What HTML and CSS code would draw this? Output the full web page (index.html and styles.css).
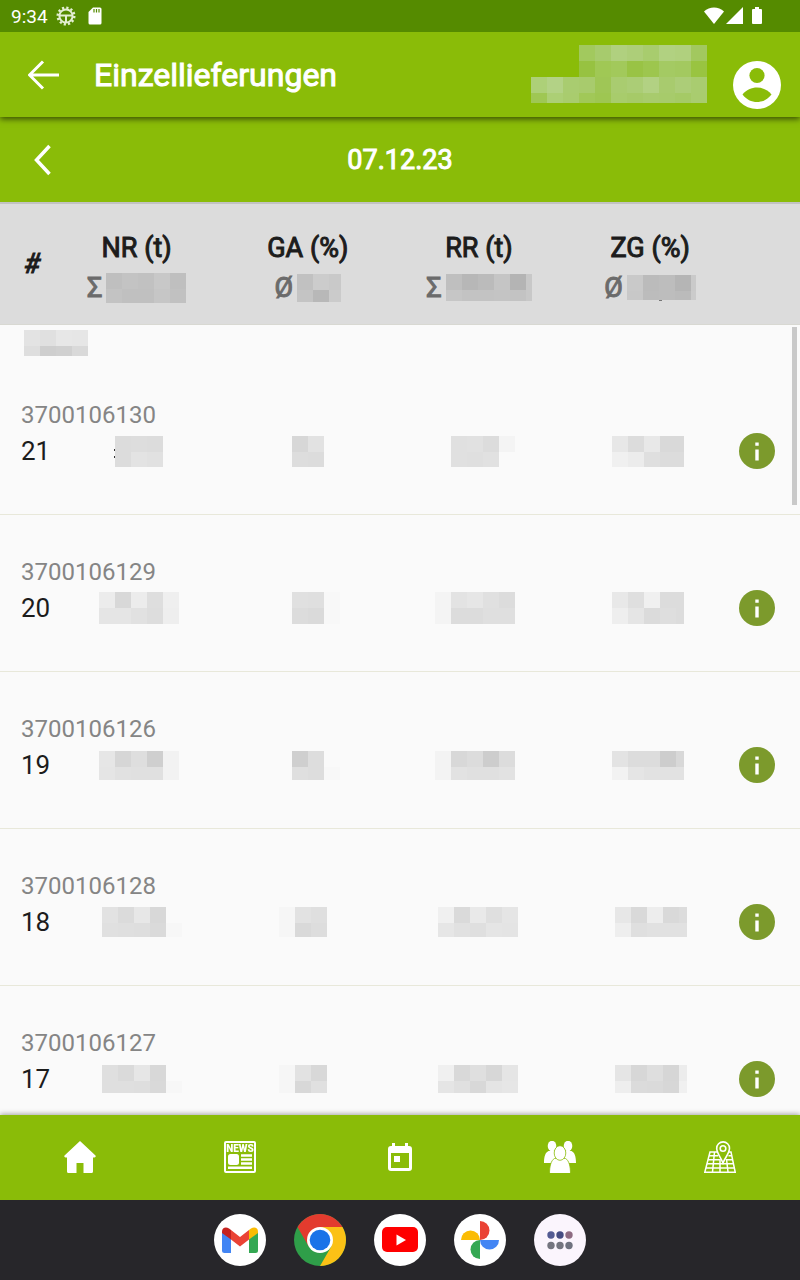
FILE: index.html
```html
<!DOCTYPE html>
<html lang="de">
<head>
    <meta charset="UTF-8">
    <meta name="viewport" content="width=device-width, initial-scale=1.0">
    <title>Einzellieferungen</title>
    <link rel="stylesheet" href="styles.css">
</head>
<body>

    <div class="status-bar">
        <span class="clock">9:34</span>
        <svg class="status-gear" width="20" height="20" viewBox="0 0 20 20">
            <circle cx="10" cy="10" r="8.3" fill="none" stroke="#e4efd2" stroke-width="2.400" stroke-dasharray="2.2 2.15"/>
            <circle cx="10" cy="10" r="6.6" fill="none" stroke="#e4efd2" stroke-width="2"/>
            <path d="M4 9.5h12M10 10v6" stroke="#e4efd2" stroke-width="2"/>
        </svg>
        <svg class="status-card" width="14" height="18" viewBox="0 0 14 18">
            <path fill="#fff" d="M5 0.5h7q1.5 0 1.5 1.5v14q0 1.500-1.500 1.500h-10q-1.500 0-1.500-1.500v-11z"/>
            <path d="M6 2v3.500M8.500 2v3.500M11 2v3.500" stroke="#558b00" stroke-width="1.200"/>
        </svg>
        <div class="status-right">
            <svg width="20" height="17" viewBox="0 0 20 17"><path fill="#fff" d="M10 17L0 4.500C5.500-.7 14.500-.7 20 4.500z"/></svg>
            <svg width="17" height="17" viewBox="0 0 17 17"><path fill="#fff" d="M17 0v17H0z"/></svg>
            <svg class="battery" width="10" height="17" viewBox="0 0 10 17"><path fill="#fff" d="M3 0h4v2h2q1 0 1 1v13q0 1-1 1H1q-1 0-1-1V3q0-1 1-1h2z"/></svg>
        </div>
    </div>

    <header class="app-header">
        <button class="icon-button" aria-label="Zurück">
            <svg width="32" height="30" viewBox="0 0 32 30"><path d="M31 15H2M15 1.500L1.500 15 15 28.500" fill="none" stroke="#fff" stroke-width="3"/></svg>
        </button>
        <h1>Einzellieferungen</h1>
        <svg class="mosaic user-name" id="user-name"></svg>
        <button class="icon-button profile" aria-label="Profil">
            <svg width="48" height="48" viewBox="0 0 48 48">
                <circle cx="24" cy="24" r="24" fill="#fff"/>
                <circle cx="24" cy="14.500" r="7.600" fill="#8abc08"/>
                <path fill="#8abc08" d="M9.500 33.500C17 24.300 31 24.300 38.500 33.500C31 43.500 17 43.500 9.500 33.500z"/>
            </svg>
        </button>
    </header>

    <div class="date-bar">
        <button class="icon-button" aria-label="Vorheriger Tag">
            <svg width="18" height="32" viewBox="0 0 18 32"><path d="M16.500 2L3.500 16l13 14" fill="none" stroke="#fff" stroke-width="3.500"/></svg>
        </button>
        <h2>07.12.23</h2>
    </div>

    <main class="deliveries">
        <div class="scroller">
            <table>
                <colgroup>
                    <col class="col-number">
                    <col class="col-value">
                    <col class="col-value">
                    <col class="col-value">
                    <col class="col-value">
                    <col>
                </colgroup>
                <thead>
                    <tr>
                        <th class="number-head">#</th>
                        <th class="value-head">NR (t)<div class="total">Σ <svg class="mosaic" data-total="0"></svg></div></th>
                        <th class="value-head">GA (%)<div class="total">Ø <svg class="mosaic" data-total="1"></svg></div></th>
                        <th class="value-head">RR (t)<div class="total">Σ <svg class="mosaic" data-total="2"></svg></div></th>
                        <th class="value-head">ZG (%)<div class="total">Ø <svg class="mosaic" data-total="3"></svg></div></th>
                        <th></th>
                    </tr>
                </thead>
                <tbody>
                    <tr class="group"><td colspan="6"><svg class="mosaic" id="group-name"></svg></td></tr>
                </tbody>
            </table>
        </div>
        <div class="scroll-thumb"></div>
    </main>

    <nav class="tab-bar">
        <a href="#start" aria-label="Start">
            <svg width="32" height="32" viewBox="0 0 32 32"><path fill="#fff" d="M16 0l15.500 14.500q.8 1.500-1 2H29v14q0 1.500-1.500 1.500H19.500V22h-7v10H4.500Q3 32 3 30.500v-14H1.500q-1.800-.5-1-2z"/></svg>
        </a>
        <a href="#news" aria-label="Neuigkeiten">
            <svg width="32" height="32" viewBox="0 0 32 32">
                <rect x="1" y="1" width="30" height="30" rx="1" fill="none" stroke="#fff" stroke-width="2"/>
                <text class="news-label" x="16" y="11" text-anchor="middle">NEWS</text>
                <rect x="4" y="13" width="11" height="11" rx="2.500" fill="#fff"/>
                <path d="M17 14.500h11M17 18.500h11M17 22.500h11M4 26.800h24" stroke="#fff" stroke-width="2.400"/>
            </svg>
        </a>
        <a href="#kalender" aria-label="Kalender">
            <svg width="24" height="28" viewBox="0 0 24 28">
                <path fill="#fff" fill-rule="evenodd" d="M4 0h3v3h10V0h3v3h1q3 0 3 3v19q0 3-3 3H3q-3 0-3-3V6q0-3 3-3h1zM3 10v15h18V10z"/>
                <rect x="6" y="13" width="6" height="6" fill="#fff"/>
            </svg>
        </a>
        <a href="#gruppen" aria-label="Gruppen">
            <svg width="32" height="32" viewBox="0 0 32 32">
                <g fill="#fff">
                    <ellipse cx="8" cy="5" rx="4.300" ry="5.200"/>
                    <ellipse cx="24" cy="5" rx="4.300" ry="5.200"/>
                    <path d="M0 22C0 15 1.500 11.500 4.500 10H14v12zM32 22C32 15 30.500 11.500 27.500 10H18v12z"/>
                </g>
                <g fill="#fff" stroke="#8abc08" stroke-width=".8">
                    <path d="M5.500 33C5.500 25 7 19.500 10.500 17.500h11C25 19.500 26.500 25 26.500 33z"/>
                    <ellipse cx="16" cy="12" rx="5.800" ry="7.300"/>
                </g>
            </svg>
        </a>
        <a href="#karte" aria-label="Karte">
            <svg width="32" height="32" viewBox="0 0 32 32" fill="none" stroke="#fff" stroke-width="1.500">
                <path d="M13 11H6L.8 31.200h30.400L27 11h-2M5 14.800h9M4.200 18.800h11M22 18.800h6.500M3 22.800h26.500M2 27h28.500M10.500 11L8.500 31M16 18v13M22.500 18l1.500 13M24.500 14.800h3.500"/>
                <path fill="#8abc08" stroke-width="1.600" d="M19 22C17 16.500 12.700 12.500 12.700 7.300a6.400 6.400 0 0 1 12.800 0C25.500 12.500 21 16.500 19 22z"/>
                <circle cx="19" cy="7.500" r="2.800" stroke-width="1.600"/>
            </svg>
        </a>
    </nav>

    <div class="dock">
        <button aria-label="Gmail">
            <svg width="52" height="52" viewBox="0 0 52 52">
                <circle cx="26" cy="26" r="26" fill="#fff"/>
                <path fill="#4285f4" d="M8 18l9 6v15h-6.500Q8 39 8 36.500z"/>
                <path fill="#34a853" d="M44 18l-9 6v15h6.500q2.500 0 2.500-2.500z"/>
                <path fill="#ea4335" d="M17 16l9 7 9-7v9.500l-9 7-9-7z"/>
                <path fill="#c5221f" d="M8 17.500c0-4 4-5 7-3l2 1.500v9.500l-9-6.500z"/>
                <path fill="#fbbc04" d="M44 17.500c0-4-4-5-7-3L35 16v9.500l9-6.500z"/>
            </svg>
        </button>
        <button aria-label="Chrome">
            <svg width="52" height="52" viewBox="0 0 52 52">
                <circle cx="26" cy="26" r="26" fill="#2f9e49"/>
                <path fill="#fbc116" d="M26 13h22.500A26 26 0 0 1 26 52L37.300 32.500z"/>
                <path fill="#e33b2e" d="M3.500 13A26 26 0 0 1 48.500 13H26L14.700 32.500z"/>
                <circle cx="26" cy="26" r="13" fill="#fff"/>
                <circle cx="26" cy="26" r="10.300" fill="#1a73e8"/>
            </svg>
        </button>
        <button aria-label="YouTube">
            <svg width="52" height="52" viewBox="0 0 52 52">
                <circle cx="26" cy="26" r="26" fill="#fff"/>
                <rect x="8" y="13" width="36" height="25" rx="5" fill="#f00"/>
                <path fill="#fff" d="M22.500 20.500v11l9.500-5.500z"/>
            </svg>
        </button>
        <button aria-label="Fotos">
            <svg width="52" height="52" viewBox="0 0 52 52">
                <circle cx="26" cy="26" r="26" fill="#fff"/>
                <path fill="#ea4335" d="M26 7a9.500 9.500 0 0 1 0 19z"/>
                <path fill="#4285f4" d="M45 26a9.500 9.500 0 0 1-19 0z"/>
                <path fill="#34a853" d="M26 45a9.500 9.500 0 0 1 0-19z"/>
                <path fill="#fbbc04" d="M7 26a9.500 9.500 0 0 1 19 0z"/>
            </svg>
        </button>
        <button aria-label="Alle Apps">
            <svg width="52" height="52" viewBox="0 0 52 52">
                <circle cx="26" cy="26" r="26" fill="#fbf5fd"/>
                <circle cx="17" cy="21" r="3.700" fill="#535b93"/>
                <circle cx="26" cy="21" r="3.700" fill="#454c82"/>
                <circle cx="35" cy="21" r="3.700" fill="#8d6b82"/>
                <circle cx="17" cy="31.500" r="3.700" fill="#74757f"/>
                <circle cx="26" cy="31.500" r="3.700" fill="#74757f"/>
                <circle cx="35" cy="31.500" r="3.700" fill="#6f727f"/>
            </svg>
        </button>
    </div>

    <script src="app.js"></script>
</body>
</html>
```

FILE: styles.css
```css
* {
    margin: 0;
    padding: 0;
    box-sizing: border-box;
}

body {
    font-family: Roboto, sans-serif;
    background-color: #fafafa;
    color: #1c1c1c;
    display: flex;
    flex-direction: column;
    height: 100vh;
}

svg {
    display: block;
    flex: none;
}

button {
    background: none;
    border: none;
    cursor: pointer;
}

/* Statusleiste */
.status-bar {
    background-color: #558b00;
    color: #fff;
    height: 32px;
    padding: 0 38px 0 11px;
    display: flex;
    align-items: center;
    flex: none;
    position: relative;
    z-index: 4;
}

.clock {
    font-size: 19px;
}

.status-gear {
    margin-left: 8px;
}

.status-card {
    margin-left: 12px;
}

.status-right {
    display: flex;
    gap: 2px;
    margin-left: auto;
    padding-bottom: 2px;
}

.battery {
    margin-left: 7px;
}

/* Kopfzeile */
.app-header {
    background-color: #8abc08;
    color: #fff;
    height: 85px;
    padding: 0 19px 0 28px;
    display: flex;
    align-items: center;
    flex: none;
    position: relative;
    z-index: 3;
    box-shadow: 0 2px 6px rgba(0, 0, 0, 0.6);
}

.app-header h1 {
    font-size: 32px;
    font-weight: 400;
    -webkit-text-stroke: 1px;
    margin-left: 34px;
}

.user-name {
    margin-left: auto;
    margin-bottom: 2px;
}

.profile {
    margin-left: 26px;
    padding-top: 20px;
}

.date-bar {
    background-color: #8abc08;
    color: #fff;
    height: 85px;
    padding: 0 33px;
    display: grid;
    grid-template-columns: 1fr auto 1fr;
    align-items: center;
    flex: none;
}

.date-bar .icon-button {
    justify-self: start;
}

.date-bar h2 {
    font-size: 27px;
    font-weight: 400;
    -webkit-text-stroke: 1px;
}

/* Tabelle */
.deliveries {
    flex: 1;
    min-height: 0;
    position: relative;
}

.scroller {
    height: 100%;
    overflow-y: auto;
    scrollbar-width: none;
}

.scroll-thumb {
    position: absolute;
    top: 125px;
    right: 3px;
    width: 5px;
    height: 178px;
    background-color: #c9c9c9;
}

table {
    width: 100%;
    table-layout: fixed;
    border-collapse: separate;
    border-spacing: 0;
}

.col-number {
    width: 51px;
}

.col-value {
    width: 21.4%;
}

thead th {
    position: sticky;
    top: 0;
    height: 123px;
    background-color: #dcdcdc;
    border-top: 2px solid #c2c2c2;
    border-bottom: 1px solid #d8d8d2;
    font-size: 27px;
    font-weight: 400;
    -webkit-text-stroke: 1px;
    line-height: 40px;
    vertical-align: middle;
}

thead .number-head {
    font-style: italic;
    padding-left: 24px;
    text-align: left;
}

thead .value-head {
    padding-top: 7px;
}

.total {
    color: #6b6b6b;
    display: flex;
    align-items: center;
    justify-content: center;
    gap: 4px;
}

.mosaic {
    overflow: visible;
}

.group td {
    height: 33px;
    padding: 5px 24px 0;
    vertical-align: top;
}

.delivery-id td {
    height: 75px;
    padding: 41px 21px 0;
    color: #858585;
    font-size: 24px;
    line-height: 32px;
    vertical-align: top;
}

.delivery-values td {
    height: 82px;
    padding-bottom: 45px;
    border-bottom: 1px solid #e8e8da;
    font-size: 26px;
    line-height: 36px;
    vertical-align: middle;
}

.delivery-values .number {
    padding-left: 21px;
}

.delivery-values .mosaic {
    margin: 0 auto;
}

.info-button {
    display: block;
    margin-left: auto;
    margin-right: 25px;
}

/* Untere Navigation */
.tab-bar {
    background-color: #8abc08;
    height: 85px;
    padding-bottom: 2px;
    display: grid;
    grid-template-columns: repeat(5, 1fr);
    flex: none;
    z-index: 3;
    box-shadow: 0 -1px 5px rgba(0, 0, 0, 0.35);
}

.tab-bar a {
    display: flex;
    align-items: center;
    justify-content: center;
}

.news-label {
    font-size: 10px;
    font-weight: 900;
    fill: #fff;
}

.dock {
    background-color: #27262a;
    height: 80px;
    display: flex;
    align-items: center;
    justify-content: center;
    gap: 28px;
    flex: none;
    z-index: 4;
}
```

FILE: app.js
```js
const CELL = 16;

// Zeichnet ein verpixeltes Feld: pro Zeile eine Liste von Farben, "-" bleibt leer
function drawMosaic(svg, mosaic) {
    const { width, height, rows, shift = 0, fullWidth = width } = mosaic;
    svg.setAttribute('width', width);
    svg.setAttribute('height', height);
    let y = 0;
    let html = '';
    rows.forEach(row => {
        const rowHeight = Math.min(CELL, height - y);
        row.split(' ').forEach((color, c) => {
            const cellWidth = Math.min(CELL, fullWidth - c * CELL);
            if (color !== '-') {
                html += `<rect x="${c * CELL + shift}" y="${y}" width="${cellWidth}" height="${rowHeight}" fill="#${color.length === 2 ? color.repeat(3) : color}"/>`;
            }
        });
        y += rowHeight;
    });
    svg.innerHTML = html + (mosaic.extra || '');
}

const userName = {
    width: 176, height: 58,
    rows: [
        '- - - a2c95e a7cb6d b0d07f adce79 a8cc6e b1d181 b0d07e a2c85f',
        '- - - 97c241 a0c855 a2c95b 99c345 9dc64e a4ca63 a3c960 99c441',
        'add078 b3d286 a9cc70 a8cb6d 9fc656 a9cc70 abcd76 b2d183 a8cb6e accd78 a9cc70',
        '9fc754 accf75 a9cc6e a1c858 9ec652 a8cc6c a6ca68 a8cb6d a7cb6b a5ca66 a9cc6f'
    ]
};

const totals = [
    { width: 80, height: 30, rows: ['bf c3 c1 c8 bf', 'c3 c0 c0 c6 c1'] },
    { width: 44, height: 28, rows: ['c1 cc c9', 'c4 b8 cb'] },
    { width: 86, height: 27, rows: ['bf b7 bb c5 b4 c8', 'c6 c3 c3 c4 c3 c8'] },
    { width: 69, height: 25, rows: ['c9 bb bd b5 ca', 'c8 bc bd bb cb'], extra: '<rect x="32" y="25" width="3" height="1" fill="#777"/>' }
];

const groupName = { width: 64, height: 26, rows: ['e3 e0 e7 e6', 'de ce d0 d9'] };

const deliveries = [
    { id: '3700106130', number: 21, height: 31, values: [
        ['- dc dd dc', '- dc e3 e1'],
        ['- d7 e2', '- dd dc'],
        ['- e0 e1 dc f4', '- e0 df e1'],
        ['e7 dc e8 d9 d9', 'f0 ec df dc dc']
    ] },
    { id: '3700106129', number: 20, height: 32, values: [
        ['ec d8 ec de ef', 'e5 e5 e1 dd ee'],
        ['- e0 df f8', '- dc da f8'],
        ['f4 e3 e6 e0 dc', 'f4 dc dc df df'],
        ['e8 df f0 dc dc', 'ee e5 db de dc']
    ] },
    { id: '3700106126', number: 19, height: 29, values: [
        ['e6 d6 de cf f2', 'e5 e1 e0 e0 f2'],
        ['- cf dd -', '- df dd f8'],
        ['f3 d8 dc cd dc', 'f3 e2 e0 e0 e2'],
        ['e3 dc dc cd d8', 'f2 e5 e2 e2 e2']
    ] },
    { id: '3700106128', number: 18, height: 30, shift: 3, values: [
        ['e2 db e7 d8 fa', 'e0 df de da f7'],
        ['f6 e2 df', 'f6 d9 dd'],
        ['f0 da e9 df e5', 'e6 e1 df e5 e4'],
        ['e7 d9 ed d9 dc', 'ee df e1 e1 e1']
    ] },
    { id: '3700106127', number: 17, height: 28, shift: 3, values: [
        ['df da e6 d8 fa', 'df df de d9 f7'],
        ['f6 e2 d8', 'f6 d8 e0'],
        ['f0 d9 df d7 e5', 'e5 e0 d8 e4 e6'],
        ['e5 d7 de d6 ec', 'ee db da d7 f0']
    ] }
];

// Breite je Wertespalte; die letzte Spalte endet schmaler
const valueWidths = [76, 64, 88, 76];
const fullWidths = [80, 64, 80, 72];

const table = document.querySelector('table');

deliveries.forEach(delivery => {
    const body = document.createElement('tbody');
    body.innerHTML = `
        <tr class="delivery-id"><td colspan="6">${delivery.id}</td></tr>
        <tr class="delivery-values">
            <td class="number">${delivery.number}</td>
            ${delivery.values.map(() => '<td><svg class="mosaic"></svg></td>').join('')}
            <td>
                <button class="info-button" aria-label="Details ${delivery.id}">
                    <svg width="36" height="36" viewBox="0 0 36 36">
                        <circle cx="18" cy="18" r="18" fill="#7c9a2c"/>
                        <path d="M18 9.500v3.300M18 16.500v11" stroke="#fff" stroke-width="3.400"/>
                    </svg>
                </button>
            </td>
        </tr>
    `;
    body.querySelectorAll('.mosaic').forEach((svg, i) => {
        drawMosaic(svg, {
            width: valueWidths[i],
            fullWidth: fullWidths[i],
            height: delivery.height,
            shift: delivery.shift,
            rows: delivery.values[i],
            extra: delivery.number === 21 && i === 0 ? '<path d="M15.500 13v2M15.500 20v2" stroke="#333"/>' : ''
        });
    });
    table.appendChild(body);
});

drawMosaic(document.getElementById('user-name'), userName);
drawMosaic(document.getElementById('group-name'), groupName);
document.querySelectorAll('[data-total]').forEach(svg => drawMosaic(svg, totals[svg.dataset.total]));
```
